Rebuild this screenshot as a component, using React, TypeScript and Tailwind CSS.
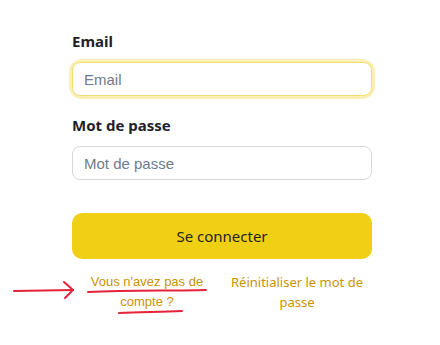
import { useState } from 'react';

const App = () => {
    const [form, setForm] = useState({ email: '', password: '' });

    return (
        <div className="relative w-[440px] h-[345px] bg-white font-['Noto_Sans',sans-serif] text-[#1e2329]">
            <div className="w-[300px] ml-[72px] pt-[30px]">
                <label className="block text-[15px] leading-[22px] font-bold mb-[10px]">Email</label>
                <div className="rounded-[10px] ring-[3px] ring-[#fcefb6]">
                    <input
                        type="email"
                        placeholder="Email"
                        value={form.email}
                        onChange={e => setForm({ ...form, email: e.target.value })}
                        className="block w-full h-[34px] px-[11px] rounded-[8px] border border-[#f3dc72] bg-white text-[15px] font-['Liberation_Sans',sans-serif] placeholder:text-[#707a8a] outline-none"
                    />
                </div>

                <label className="block text-[15px] leading-[22px] font-bold mt-[18px] mb-[10px]">Mot de passe</label>
                <input
                    type="password"
                    placeholder="Mot de passe"
                    value={form.password}
                    onChange={e => setForm({ ...form, password: e.target.value })}
                    className="block w-full h-[34px] px-[11px] rounded-[8px] border border-[#d5d8dc] bg-white text-[15px] font-['Liberation_Sans',sans-serif] placeholder:text-[#707a8a] outline-none"
                />

                <button className="mt-[33px] w-full h-[46px] rounded-[10px] bg-[#f0d014] text-[15px] text-[#1e2329]">
                    Se connecter
                </button>

                <div className="grid grid-cols-2 mt-[13px] text-[13px] leading-[20px] text-[#c99400] text-center">
                    <a className="px-[14px] font-['Liberation_Sans',sans-serif]">Vous n'avez pas de compte ?</a>
                    <a className="px-[6px]">Réinitialiser le mot de passe</a>
                </div>
            </div>

            {/* red annotation overlay */}
            <svg className="absolute inset-0 pointer-events-none" width="440" height="345" viewBox="0 0 440 345" fill="none">
                <g stroke="#e5233a" strokeWidth="2" strokeLinecap="round" strokeLinejoin="round">
                    <path d="M14 291 L73 290" />
                    <path d="M64 282 L73 290 L65 298" />
                    <path d="M88 292 C130 290 170 291 206 290" />
                    <path d="M119 313 C140 312 160 312 182 311" />
                </g>
            </svg>
        </div>
    );
};

export default App;
